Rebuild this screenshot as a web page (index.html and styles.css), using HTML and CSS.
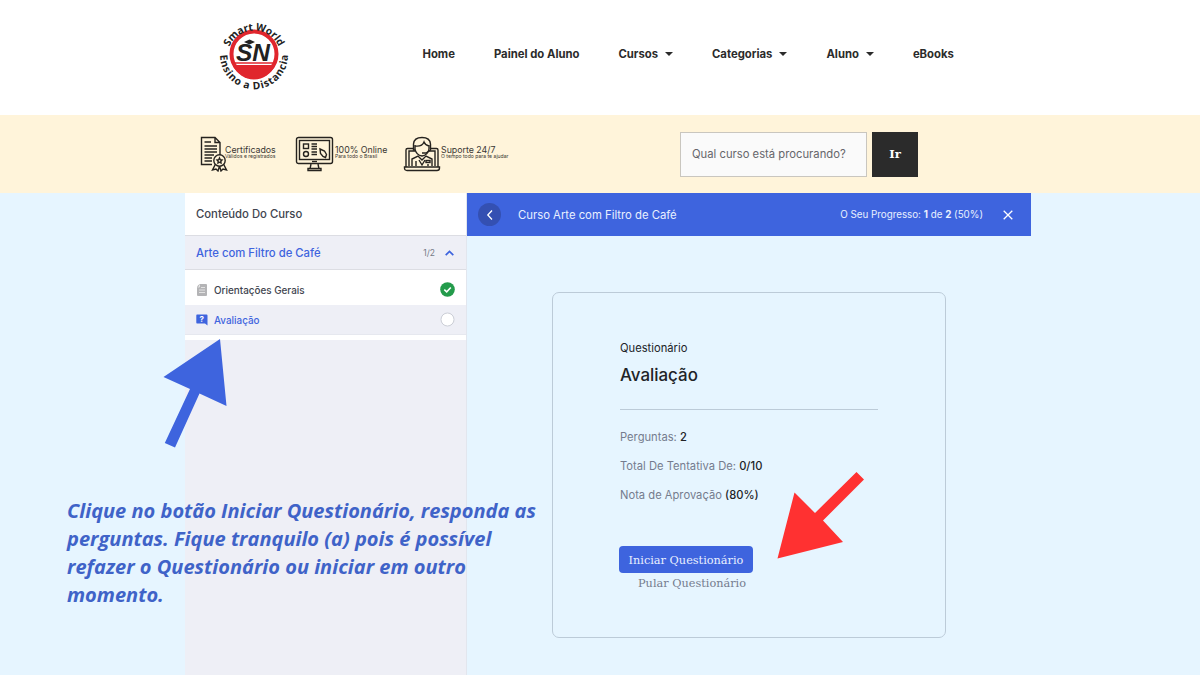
FILE: index.html
```html
<!DOCTYPE html>
<html lang="pt-BR">
<head>
    <meta charset="UTF-8">
    <meta name="viewport" content="width=device-width, initial-scale=1.0">
    <title>Avaliação - Smart World Ensino a Distancia</title>
    <link rel="stylesheet" href="styles.css">
</head>
<body>
    <header class="site-header">
        <svg class="logo" width="76" height="76" viewBox="0 0 76 76">
            <defs>
                <path id="arcTop" d="M11.500 41 A26.500 26.500 0 0 1 64.500 41"/>
                <path id="arcBottom" d="M4.400 34 A34 34 0 1 0 71.600 34"/>
            </defs>
            <circle cx="38" cy="38" r="22.500" fill="#fff" stroke="#e0262d" stroke-width="4"/>
            <path d="M17 49 H59 A22.500 22.500 0 0 1 17 49 Z" fill="#e0262d"/>
            <path d="M16 47 H60" stroke="#e0262d" stroke-width="1.500"/>
            <text class="logo-mark" x="20" y="45" textLength="34" lengthAdjust="spacingAndGlyphs">SN</text>
            <path d="M28 26 L33.500 23.500 L39 26 L33.500 28.500 Z" fill="#222"/>
            <text class="logo-text" text-anchor="middle"><textPath href="#arcTop" startOffset="50%" textLength="62">Smart World</textPath></text>
            <text class="logo-text" text-anchor="middle"><textPath href="#arcBottom" startOffset="50%" textLength="107">Ensino a Distancia</textPath></text>
        </svg>
        <nav class="menu">
            <a>Home</a>
            <a>Painel do Aluno</a>
            <a class="has-sub">Cursos</a>
            <a class="has-sub">Categorias</a>
            <a class="has-sub">Aluno</a>
            <a>eBooks</a>
        </nav>
    </header>

    <section class="band">
        <div class="features">
            <div class="feature certificate">
                <svg width="28" height="36" viewBox="0 0 28 36">
                    <path d="M12 28.500 H1.500 V1.500 H15 L20 6.500 V19 M15 1.500 V6.500 H20"/>
                    <path d="M4.500 6 H11 M4.500 10 H17 M4.500 13 H17 M4.500 16 H17 M4.500 19 H14 M4.500 22 H12 M4.500 25 H12"/>
                    <path d="M15.500 28 L12.500 34 L16 33 L18 35 L19.500 30 L21 35 L23 33 L26.500 34 L23.500 28"/>
                    <circle class="paper" cx="19.500" cy="24.500" r="5.700"/>
                    <path d="M19.500 22 L20.300 23.700 L22 24 L20.800 25.200 L21 27 L19.500 26.200 L18 27 L18.200 25.200 L17 24 L18.700 23.700 Z"/>
                </svg>
                <div><b>Certificados</b><small>Válidos e registrados</small></div>
            </div>
            <div class="feature online">
                <svg width="39" height="36" viewBox="0 0 39 36">
                    <rect x="1.500" y="1.500" width="36" height="26" rx="2"/>
                    <rect x="4.500" y="4.500" width="30" height="19"/>
                    <rect x="8.500" y="8" width="5" height="4.500"/>
                    <circle cx="11" cy="18" r="2.500"/>
                    <path d="M16.500 8 H22 M16.500 10.500 H22 M16.500 13 H22 M16.500 16 H22 M16.500 18.500 H22 M16 28 L15 33 M23 28 L24 33 M13 34.500 V32.500 H26 V34.500 Z"/>
                    <path d="M25 13 L29.500 15 L31.500 18.500 L30.500 21.500 L28 20.500 L25.500 17.500 Z"/>
                    <path d="M17 25.500 H22"/>
                </svg>
                <div><b>100% Online</b><small>Para todo o Brasil</small></div>
            </div>
            <div class="feature support">
                <svg width="38" height="36" viewBox="0 0 38 36">
                    <path d="M11 12.500 H4.500 Q3 12.500 3 14 V31 M27 12.500 H33.500 Q35 12.500 35 14 V31 M6 30 V15 H12 M32 30 V15 H26"/>
                    <path d="M1.500 31 H36.500 V32 Q36.500 34.500 34 34.500 H4 Q1.500 34.500 1.500 32 Z"/>
                    <path d="M9 30 V23 L15 20 L19 24 L23 20 L29 23 V30 M13 25 V30 M25 28 V30 M16 24 L19 29 L22 24"/>
                    <rect x="23" y="24.500" width="4" height="2"/>
                    <path d="M12 9 V13 Q13 19 19 20 Q25 19 26 13 V9 M12 10 Q19 11 21 6 Q22 9 26 10"/>
                    <path d="M10.500 14 V8 Q11 1.500 19 1.500 Q27 1.500 27.500 8 V14 M10.500 9 V14 H12 M27.500 9 V14 L23 17 H19"/>
                </svg>
                <div><b>Suporte 24/7</b><small>O tempo todo para te ajudar</small></div>
            </div>
        </div>
        <form class="search">
            <input type="text" placeholder="Qual curso está procurando?">
            <button type="button">Ir</button>
        </form>
    </section>

    <main class="player">
        <aside class="sidebar">
            <h2>Conteúdo Do Curso</h2>
            <div class="topic">
                <span>Arte com Filtro de Café</span>
                <small>1/2</small>
                <svg width="9" height="6" viewBox="0 0 9 6"><path d="M.700 5.200 L4.500 1.400 L8.300 5.200" fill="none" stroke="#3e64de" stroke-width="1.700"/></svg>
            </div>
            <div class="lesson">
                <svg width="12" height="12" viewBox="0 0 12 12">
                    <path d="M3.500 0 H10 Q11 0 11 1 V11 Q11 12 10 12 H2 Q1 12 1 11 V2.500 Z" fill="#b4b4b6"/>
                    <path d="M3.500 .5 V3 H1.500 M5 3.500 H9 M3 6 H9 M3 8.500 H9" fill="none" stroke="#eee" stroke-width=".8"/>
                </svg>
                <span>Orientações Gerais</span>
                <svg class="status" width="15" height="15" viewBox="0 0 15 15"><circle cx="7.500" cy="7.500" r="7.300" fill="#239b4b"/><path d="M4.300 7.600 L6.700 9.800 L10.800 5.500" fill="none" stroke="#fff" stroke-width="1.600"/></svg>
            </div>
            <div class="lesson active">
                <svg width="12" height="12" viewBox="0 0 12 12">
                    <path d="M1 .5 H10.500 Q11.500 .5 11.500 1.500 V11.500 L9 9.500 H1 Q.3 9.500 .3 8.500 V1.500 Q.3 .5 1 .5 Z" fill="#3e64de"/>
                    <text x="5.800" y="7.800" text-anchor="middle">?</text>
                </svg>
                <span>Avaliação</span>
                <svg class="status" width="15" height="15" viewBox="0 0 15 15"><circle cx="7.500" cy="7.500" r="6.500" fill="#fff" stroke="#cbced6"/></svg>
            </div>
            <div class="sidebar-end"></div>
        </aside>

        <section class="content">
            <div class="topbar">
                <span class="back"><svg width="8" height="10" viewBox="0 0 8 10"><path d="M6 .500 L1.800 5 L6 9.500" fill="none" stroke="#fff" stroke-width="1.300"/></svg></span>
                <span class="course">Curso Arte com Filtro de Café</span>
                <span class="progress">O Seu Progresso: <b>1</b> de <b>2</b> (50%)</span>
                <svg width="10" height="10" viewBox="0 0 10 10"><path d="M.700 .700 L9.300 9.300 M9.300 .700 L.700 9.300" stroke="#fff" stroke-width="1.300"/></svg>
            </div>
            <div class="quiz">
                <p class="kind">Questionário</p>
                <h1>Avaliação</h1>
                <ul>
                    <li>Perguntas: <b>2</b></li>
                    <li>Total De Tentativa De: <b>0/10</b></li>
                    <li>Nota de Aprovação <b>(80%)</b></li>
                </ul>
                <button class="start">Iniciar Questionário</button>
                <a class="skip">Pular Questionário</a>
            </div>
        </section>
    </main>

    <!-- tutorial notes over the page -->
    <svg class="arrow-blue" width="66" height="112" viewBox="0 0 66 112"><path d="M57 1 L63.500 68 L36.500 55.500 L12 109.500 L1.800 105 L27 51 L.5 39 Z" fill="#3e64de"/></svg>
    <svg class="arrow-red" width="90" height="90" viewBox="0 0 90 90"><path d="M.500 87.500 L17.500 21.500 L38 42 L79.500 1 L87 8.500 L46 49.500 L66 71 Z" fill="#ff3131"/></svg>
    <p class="note">Clique no botão Iniciar Questionário, responda as<br>perguntas. Fique tranquilo (a) pois é possível<br>refazer o Questionário ou iniciar em outro<br>momento.</p>
</body>
</html>
```

FILE: styles.css
```css
* {
    box-sizing: border-box;
}
body {
    margin: 0;
    height: 675px;
    overflow: hidden;
    position: relative;
    font-family: Inter, sans-serif;
    background: #e6f5ff;
    color: #2b2b2b;
}

/* header */
.site-header {
    height: 115px;
    padding: 0 0 7px 216px;
    display: flex;
    align-items: center;
    background: #fff;
}
.logo {
    overflow: visible;
}
.logo-mark {
    font: italic bold 24px "Liberation Sans", sans-serif;
    fill: #222;
}
.logo-text {
    font: bold 10.3px "Open Sans", sans-serif;
    fill: #222;
}
.menu {
    display: flex;
    gap: 39px;
    margin-left: 130.5px;
    font-size: 11.3px;
    font-weight: 700;
    white-space: nowrap;
}
.has-sub {
    display: flex;
    align-items: center;
}
.has-sub::after {
    content: "";
    margin-left: 7px;
    border: 4px solid transparent;
    border-top-color: #2b2b2b;
    border-bottom: 0;
}

/* features + search */
.band {
    height: 78px;
    padding-left: 200px;
    display: flex;
    align-items: center;
    background: #fff4da;
}
.features {
    display: flex;
    width: 480px;
}
.feature {
    display: flex;
    align-items: center;
    white-space: nowrap;
}
.feature svg {
    flex: none;
    fill: none;
    stroke: #26231f;
    stroke-width: 1.4;
}
.feature .paper {
    fill: #fff4da;
}
.feature div {
    padding-bottom: 3px;
}
.feature b,
.feature small {
    display: block;
    color: #3a3733;
}
.feature b {
    font-size: 8.8px;
    font-weight: 400;
    line-height: 8px;
}
.feature small {
    font-size: 5.1px;
    line-height: 5px;
}
.certificate {
    width: 95px;
}
.certificate svg {
    margin-right: -3px;
}
.online {
    width: 108px;
}
.online svg {
    margin-right: 1px;
}
.search {
    display: flex;
    gap: 5px;
    height: 45px;
}
.search input {
    width: 187px;
    padding: 0 11px;
    border: 1px solid #c9c6bf;
    background: #fafafa;
    font: 11.25px Inter, sans-serif;
}
.search input::placeholder {
    color: #66666b;
}
.search button {
    width: 46px;
    border: 0;
    background: #2b2b2b;
    color: #fff;
    font: bold 11.7px "DejaVu Serif", serif;
}

/* course player */
.player {
    display: flex;
    width: 846px;
    height: 482px;
    margin-left: 185px;
}
.sidebar {
    width: 282px;
    background: #eeeff6;
    border-right: 1px solid #e2e6ee;
}
.sidebar h2 {
    margin: 0;
    height: 43px;
    padding-left: 11px;
    background: #fff;
    border-bottom: 1px solid #dcdde3;
    font-size: 11.3px;
    font-weight: 500;
    line-height: 42px;
    color: #41454f;
}
.topic {
    display: flex;
    align-items: center;
    height: 34px;
    padding: 0 12px 0 11px;
    border-bottom: 1px solid #dcdde3;
    color: #3e64de;
    font-size: 11.3px;
    font-weight: 500;
}
.topic small {
    margin: 0 10px 0 auto;
    color: #757a86;
    font-size: 8.5px;
    font-weight: 400;
}
.lesson {
    display: flex;
    align-items: center;
    gap: 6px;
    height: 35px;
    padding: 4px 11px 0;
    background: #fff;
    color: #41454f;
    font-size: 9.9px;
    font-weight: 500;
}
.lesson .status {
    margin-left: auto;
}
.lesson.active {
    height: 30px;
    padding-top: 0;
    border-bottom: 1px solid #e6e8ef;
    background: #eeeff6;
    color: #3e64de;
}
.lesson text {
    font: bold 8px Inter, sans-serif;
    fill: #fff;
}
.sidebar-end {
    height: 5px;
    background: #fff;
}
.content {
    width: 564px;
}
.topbar {
    display: flex;
    align-items: center;
    height: 43px;
    padding: 0 18px 0 11px;
    background: #3e64de;
    color: #e9f0ff;
}
.back {
    display: flex;
    align-items: center;
    justify-content: center;
    width: 23px;
    height: 23px;
    border-radius: 50%;
    background: #3450b2;
}
.course {
    margin-left: 17px;
    font-size: 11.3px;
}
.progress {
    margin: 0 20px 0 auto;
    font-size: 9.8px;
}
.quiz {
    width: 394px;
    height: 346px;
    margin: 56px 0 0 85px;
    padding: 48px 67px 0;
    border: 1px solid #bccbd8;
    border-radius: 7px;
}
.kind {
    margin: 0;
    font-size: 11.2px;
    line-height: 15px;
    color: #212327;
}
.quiz h1 {
    margin: 0;
    padding: 7px 0 22px;
    border-bottom: 1px solid #bccbd8;
    font-size: 16.9px;
    font-weight: 500;
    line-height: 24px;
    color: #212327;
}
.quiz ul {
    margin: 0;
    padding: 13px 0 0;
    list-style: none;
    font-size: 11.2px;
    line-height: 29px;
    color: #757c8e;
}
.quiz li b {
    font-weight: 500;
    color: #212327;
}
.start {
    display: block;
    width: 134px;
    height: 27px;
    margin: 36px 0 0 -1px;
    padding: 1px 0 0;
    border: 0;
    border-radius: 4px;
    background: #3e64de;
    color: #e9f0ff;
    font: 11.3px "DejaVu Serif", serif;
}
.skip {
    display: block;
    padding: 3px 0 0 18px;
    font: 11.3px/16px "DejaVu Serif", serif;
    color: #757c8e;
}

/* notes */
.arrow-blue {
    position: absolute;
    left: 163px;
    top: 338px;
}
.arrow-red {
    position: absolute;
    left: 777px;
    top: 471px;
}
.note {
    position: absolute;
    left: 67px;
    top: 497px;
    margin: 0;
    font: italic bold 20.02px/28px "Open Sans", sans-serif;
    color: #3f63c8;
    white-space: nowrap;
}
```
